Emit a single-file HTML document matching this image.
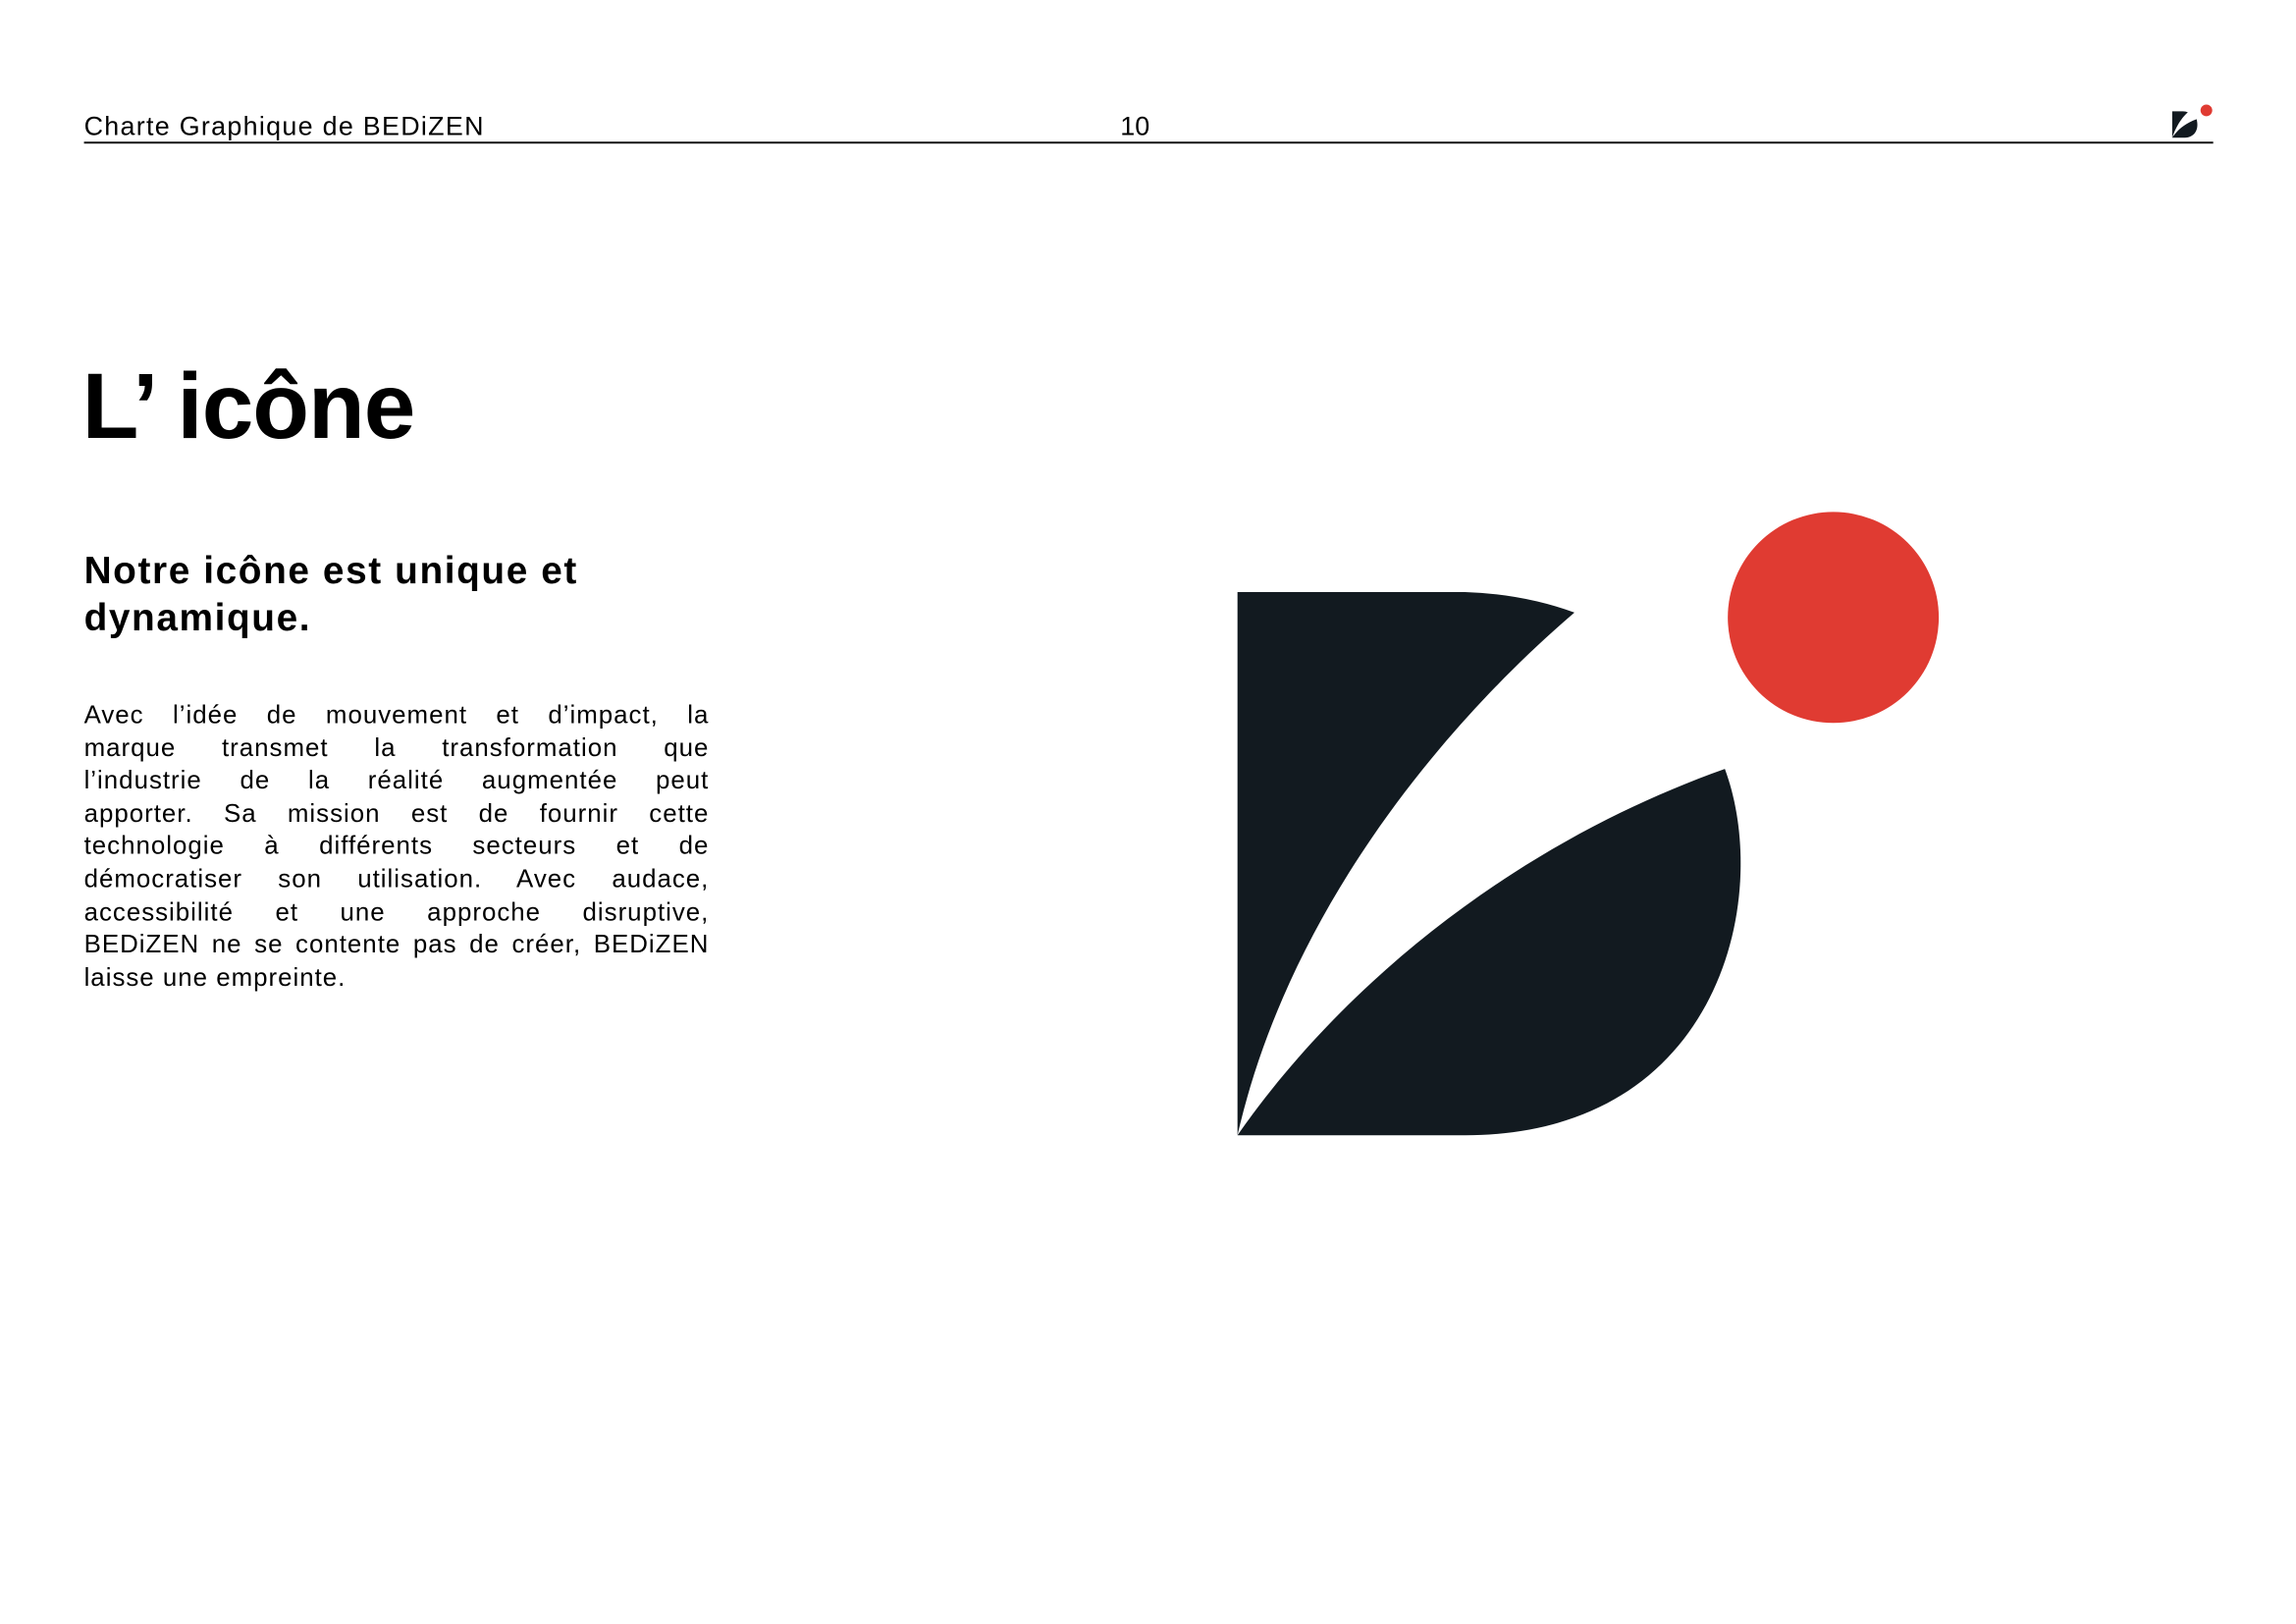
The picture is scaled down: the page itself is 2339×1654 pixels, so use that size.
<!DOCTYPE html>
<html><head><meta charset="utf-8"><style>
html,body{margin:0;padding:0;background:#fff;}
body{width:2339px;height:1654px;position:relative;overflow:hidden;font-family:"Liberation Sans",sans-serif;color:#000;}
#w{position:absolute;left:0;top:0;width:2339px;height:1654px;transform:scale(0.995);transform-origin:0 0;}
.a{position:absolute;white-space:nowrap;}
.body{position:absolute;left:86px;top:715px;width:640px;font-size:26px;line-height:33.6px;letter-spacing:1px;}
.body span{display:block;text-align:justify;text-align-last:justify;white-space:nowrap;}
.body span.l{text-align-last:left;}
</style></head><body><div id="w">
<div class="a" style="left:86px;top:114px;font-size:27px;line-height:30px;letter-spacing:1.3px;">Charte Graphique de BEDiZEN</div>
<div class="a" style="left:1147px;top:114px;font-size:27px;line-height:30px;">10</div>
<div style="position:absolute;left:86px;top:145px;width:2180px;height:2px;background:#111;"></div>
<svg style="position:absolute;left:2222px;top:106px" width="46" height="40" viewBox="0 0 46 40">
<path d="M2,8 H13 Q16,8 18,9 C12,14 5,25 2,35 Z" fill="#121a20"/>
<path d="M2,35 C8,26 16,20 27,16 C29,24 27,30 22,33 C19,35 16,35 13,35 Z" fill="#121a20"/>
<circle cx="37" cy="7" r="6" fill="#e03b32"/>
</svg>
<div class="a" style="left:84px;top:366px;font-size:95px;line-height:100px;font-weight:bold;letter-spacing:-1px;">L’ icône</div>
<div class="a" style="left:86px;top:561px;font-size:39px;line-height:48px;font-weight:bold;letter-spacing:1.6px;">Notre icône est unique et<br>dynamique.</div>
<div class="body">
<span>Avec l’idée de mouvement et d’impact, la</span>
<span>marque transmet la transformation que</span>
<span>l’industrie de la réalité augmentée peut</span>
<span>apporter. Sa mission est de fournir cette</span>
<span>technologie à différents secteurs et de</span>
<span>démocratiser son utilisation. Avec audace,</span>
<span>accessibilité et une approche disruptive,</span>
<span>BEDiZEN ne se contente pas de créer, BEDiZEN</span>
<span class="l">laisse une empreinte.</span>
</div>
<svg style="position:absolute;left:0;top:0" width="2339" height="1654">
<path d="M1267,606 H1500 Q1560,608 1612,627 C1480,740 1320,930 1267,1162 Z" fill="#121a20"/>
<path d="M1267,1162 C1380,1000 1560,860 1766,787 C1815,920 1760,1162 1500,1162 Z" fill="#121a20"/>
<circle cx="1877" cy="632" r="108" fill="#e03b32"/>
</svg>
</div></body></html>
